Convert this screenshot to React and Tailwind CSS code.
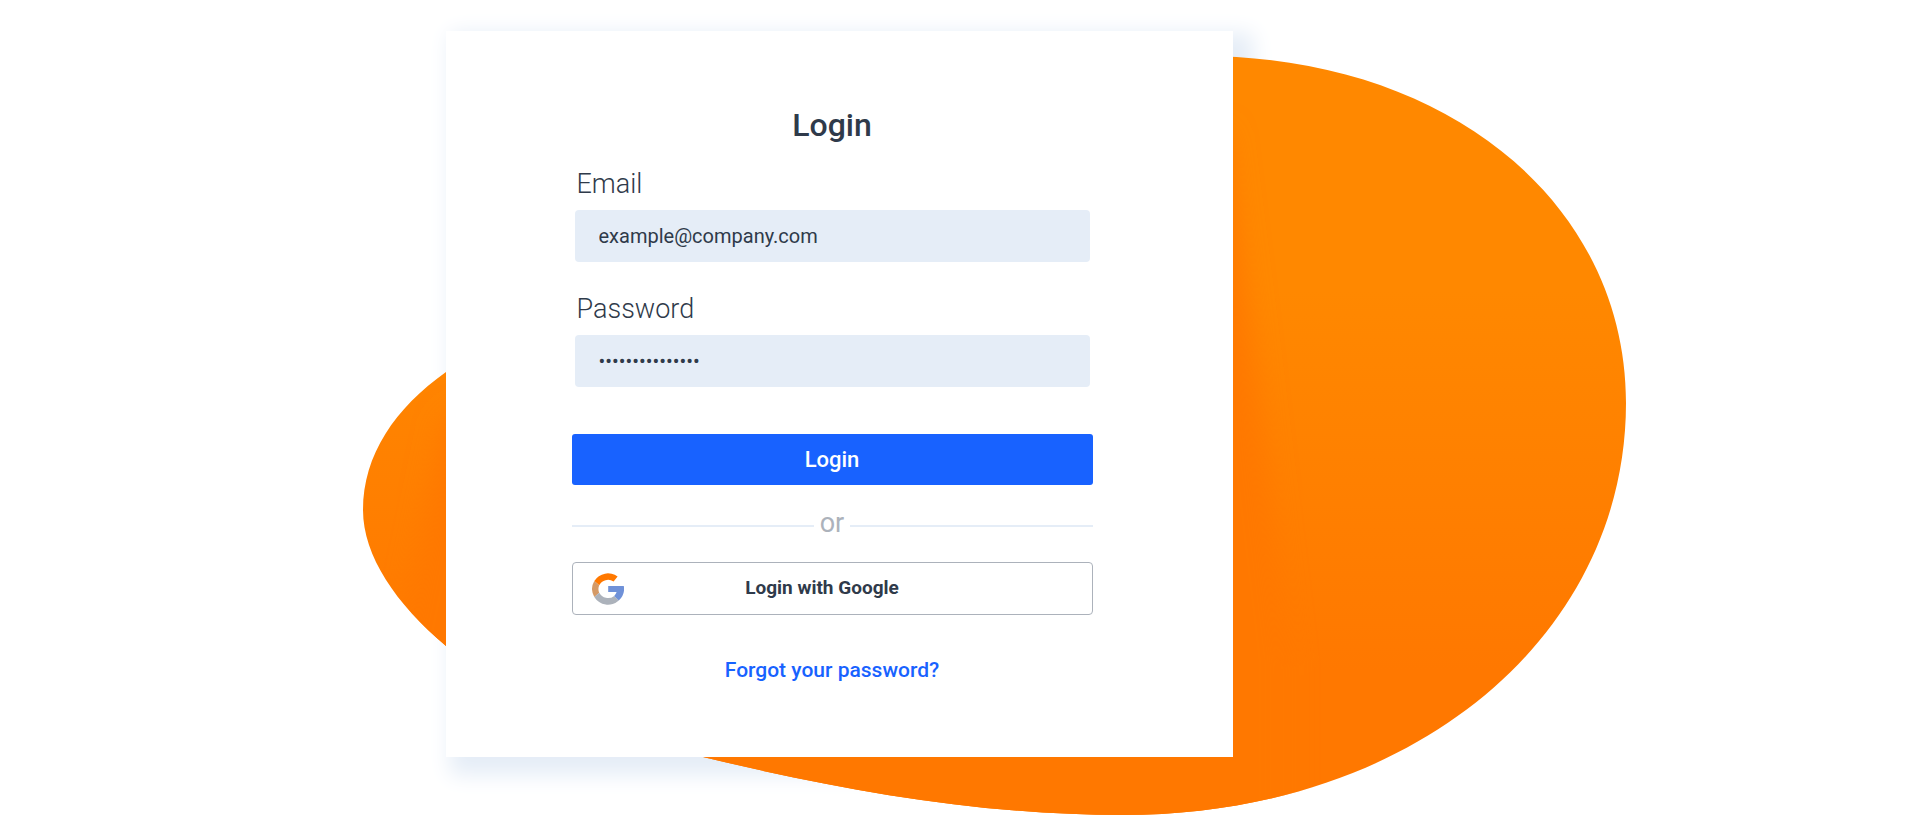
import React, { useState } from 'react';

const labelStyle = "ml-[5px] block text-[27px] leading-8 font-light";
const inputStyle = "mx-[3px] mt-[10px] h-[52px] rounded bg-[#e5edf7] px-6 text-xl text-[#2f3a4a] focus:outline-none";

const BLOB = "M1200 56 C1450 56 1626 205 1626 403 C1626 635 1415 815 1123 815 C980 815 840 790 703 757 C590 730 510 690 446 646 C396 604 363 556 363 510 C363 455 395 408 446 372 C650 230 850 35 1200 56 Z";

function Blob() {
	return(
		<svg
			className="pointer-events-none absolute top-6 -left-[83px] h-[761px] w-[1264px] max-w-none"
			viewBox="363 55 1264 761"
			aria-hidden="true"
		>
			<defs>
				<linearGradient id="blob-fill" gradientUnits="userSpaceOnUse" x1="0" y1="290" x2="0" y2="670">
					<stop offset="0" stopColor="#ff8800" />
					<stop offset="1" stopColor="#ff7800" />
				</linearGradient>
				<clipPath id="blob-clip">
					<path d={BLOB} />
				</clipPath>
				<filter id="blob-shade" x="-20%" y="-20%" width="140%" height="140%">
					<feGaussianBlur stdDeviation="14" />
				</filter>
			</defs>
			<path d={BLOB} fill="url(#blob-fill)" />
			<g clipPath="url(#blob-clip)">
				<path d="M446 420 L1225 130 L1250 330 L1290 660 L1290 850 L385 850 L400 640 Z" fill="#ff7800" filter="url(#blob-shade)" />
			</g>
		</svg>
	)
}

function GoogleIcon() {
	return(
		<svg className="h-8 w-8 shrink-0" viewBox="0 0 32 32" aria-hidden="true">
			<path d="M25.6 3.6 A16 16 0 0 0 2.3 8 L7.2 12.2 A10 10 0 0 1 21.6 8.6 Z" fill="#ff7800" />
			<path d="M2.3 8 A16 16 0 0 0 2.3 24 L7.2 19.8 A10 10 0 0 1 7.2 12.2 Z" fill="#d59a66" />
			<path d="M2.3 24 A16 16 0 0 0 26.8 27.6 L22.2 22.9 A10 10 0 0 1 7.2 19.8 Z" fill="#acb2bb" />
			<path d="M16.2 13 H31.8 A16 16 0 0 1 26.8 27.6 L22.2 22.9 A9 9 0 0 0 24.6 19 H16.2 Z" fill="#6f91d8" />
		</svg>
	)
}

export default function App() {
	const [ email, setEmail ] = useState("example@company.com");
	const [ password, setPassword ] = useState("mypassword12345");

	return(
		<main className="flex min-h-screen w-full items-start justify-center overflow-hidden bg-white pt-[31px] pb-[69px] font-['Roboto',sans-serif] text-[#2f3a4a] lg:pr-[238px]">
			<div className="relative w-full max-w-[787px]">
				<div className="absolute inset-0 shadow-[12px_10px_20px_8px_#e5edf7]" />
				<Blob />
				<form
					className="relative flex flex-col bg-white pt-[74px] pr-[140px] pb-[73px] pl-[126px]"
					onSubmit={(e) => e.preventDefault()}
				>
					<h1 className="text-center text-[32px] leading-10 font-medium">Login</h1>

					<label htmlFor="email" className={`${labelStyle} mt-[23px]`}>Email</label>
					<input
						id="email"
						type="email"
						className={inputStyle}
						value={email}
						onChange={(e) => setEmail(e.target.value)}
					/>

					<label htmlFor="password" className={`${labelStyle} mt-[31px]`}>Password</label>
					<input
						id="password"
						type="password"
						className={inputStyle}
						value={password}
						onChange={(e) => setPassword(e.target.value)}
					/>

					<button type="submit" className="mt-[47px] h-[51px] rounded-[3px] bg-[#1862ff] text-[22px] font-medium text-white">
						Login
					</button>

					<div className="mt-[22px] flex items-center gap-[6px] text-[27px] leading-8 text-[#acb2bb]">
						<span className="mt-[6px] h-[2px] flex-1 bg-[#e5edf7]" />
						or
						<span className="mt-[6px] h-[2px] flex-1 bg-[#e5edf7]" />
					</div>

					<button type="button" className="mt-[23px] grid h-[53px] grid-cols-[32px_1fr_52px] items-center rounded border border-[#acb2bb] px-[19px] text-[19px] font-bold">
						<GoogleIcon />
						<span>Login with Google</span>
					</button>

					<a href="#" className="mt-[41px] self-center text-[21px] leading-7 font-medium text-[#1862ff]">Forgot your password?</a>
				</form>
			</div>
		</main>
	)
}
